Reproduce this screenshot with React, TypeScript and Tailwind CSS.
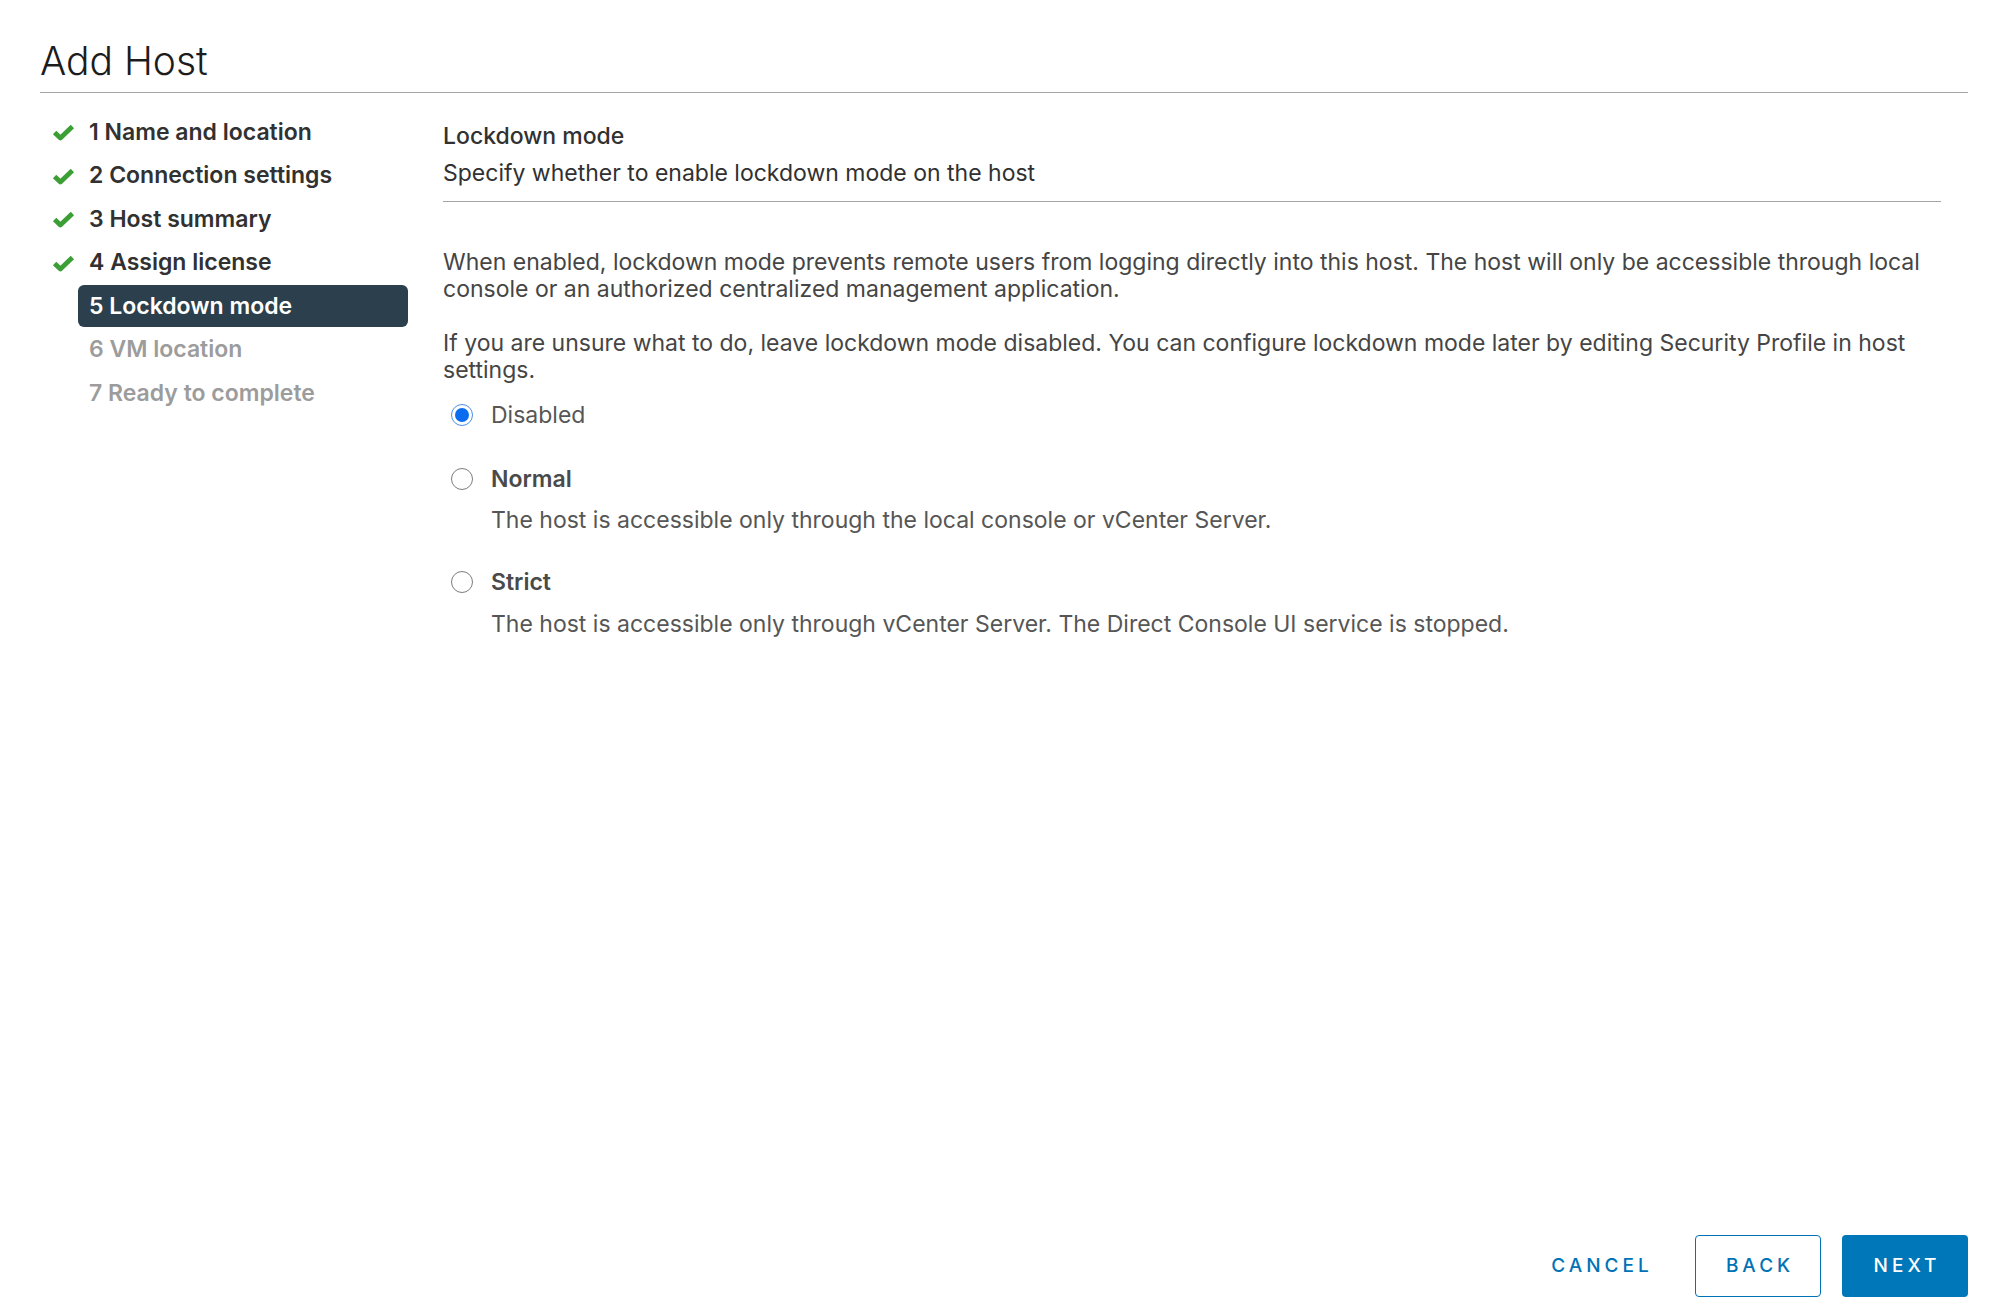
const steps = [
  { n: 1, label: 'Name and location', state: 'done' },
  { n: 2, label: 'Connection settings', state: 'done' },
  { n: 3, label: 'Host summary', state: 'done' },
  { n: 4, label: 'Assign license', state: 'done' },
  { n: 5, label: 'Lockdown mode', state: 'current' },
  { n: 6, label: 'VM location', state: 'todo' },
  { n: 7, label: 'Ready to complete', state: 'todo' },
];

const options = [
  { label: 'Disabled', desc: '', checked: true },
  { label: 'Normal', desc: 'The host is accessible only through the local console or vCenter Server.', checked: false },
  { label: 'Strict', desc: 'The host is accessible only through vCenter Server. The Direct Console UI service is stopped.', checked: false },
];

function CheckMark() {
  return (
    <svg width="23" height="17" viewBox="0 0 23 17" fill="none">
      <path d="M2.6 8.4 L8.4 14 L20.4 2.6" stroke="#3c9f36" strokeWidth="4.8" strokeLinejoin="round" />
    </svg>
  );
}

function Radio({ checked }: { checked: boolean }) {
  if (checked) {
    return (
      <span className="flex h-[22px] w-[22px] shrink-0 items-center justify-center rounded-full border-[1.5px] border-[#4d8fe8] bg-white">
        <span className="h-[14px] w-[14px] rounded-full bg-[#0b6cf0]" />
      </span>
    );
  }
  return <span className="h-[22px] w-[22px] shrink-0 rounded-full border border-[#7d7d7d] bg-white" />;
}

export default function App() {
  return (
    <div className="flex min-h-screen flex-col bg-white pl-[40px] pr-[32px] font-['Inter',sans-serif] text-[#313131]">
      <header className="border-b border-[#a3a3a3] pt-[37px] pb-[7px]">
        <h1 className="text-[39px] font-light leading-[48px] text-[#1c1c1c]">Add Host</h1>
      </header>

      <div className="flex flex-1">
        <nav className="w-[368px] shrink-0 pt-[17px]">
          {steps.map(s => (
            <div key={s.n} className="flex h-[43.5px] items-center">
              <div className="w-[38px] shrink-0 pl-[12px] pt-[2px]">{s.state === 'done' && <CheckMark />}</div>
              <div
                className={
                  s.state === 'current'
                    ? 'flex h-[42px] w-[330px] items-center rounded-[6px] bg-[#2b3f4d] px-[11px] text-[23px] font-semibold text-white'
                    : s.state === 'done'
                      ? 'flex h-[42px] w-[330px] items-center px-[11px] text-[23px] font-semibold text-[#313131]'
                      : 'flex h-[42px] w-[330px] items-center px-[11px] text-[23px] font-semibold text-[#9c9c9c]'
                }
              >
                {s.n} {s.label}
              </div>
            </div>
          ))}
        </nav>

        <main className="ml-[35px] flex-1 pr-[27px] pt-[29px]">
          <h2 className="text-[23px] font-medium leading-[28px] text-[#313131]">Lockdown mode</h2>
          <p className="mt-[9px] text-[23px] leading-[28px] text-[#313131]">Specify whether to enable lockdown mode on the host</p>
          <div className="mt-[14px] border-b border-[#a3a3a3]" />

          <p className="mt-[47px] text-[23px] leading-[27px] text-[#454545]">
            When enabled, lockdown mode prevents remote users from logging directly into this host. The host will only be accessible through local console or an authorized centralized management application.
          </p>
          <p className="mt-[27px] text-[23px] leading-[27px] text-[#454545]">
            If you are unsure what to do, leave lockdown mode disabled. You can configure lockdown mode later by editing Security Profile in host settings.
          </p>

          <div className="mt-[17px] flex flex-col">
            {options.map((o, i) => (
              <div key={o.label} className={i === 0 ? '' : i === 1 ? 'mt-[36px]' : 'mt-[34px]'}>
                <label className="flex h-[28px] items-center gap-[18px] pl-[8px]">
                  <Radio checked={o.checked} />
                  <span className={o.checked ? 'text-[23px] text-[#565656]' : 'text-[23px] font-semibold text-[#4a4a4a]'}>{o.label}</span>
                </label>
                {o.desc && (
                  <p className={i === 1 ? 'mt-[14px] pl-[48px] text-[23px] leading-[27px] text-[#565656]' : 'mt-[15px] pl-[48px] text-[23px] leading-[27px] text-[#565656]'}>
                    {o.desc}
                  </p>
                )}
              </div>
            ))}
          </div>
        </main>
      </div>

      <footer className="flex items-center justify-end pb-[19px]">
        <button className="mr-[32px] flex h-[62px] w-[126px] items-center justify-center pl-[4px] text-[19px] font-medium uppercase tracking-[4px] text-[#0072b5]">
          Cancel
        </button>
        <button className="mr-[21px] flex h-[62px] w-[126px] items-center justify-center rounded-[4px] border border-[#0072b5] bg-white pl-[4px] text-[19px] font-medium uppercase tracking-[4px] text-[#0072b5]">
          Back
        </button>
        <button className="flex h-[62px] w-[126px] items-center justify-center rounded-[4px] bg-[#0077b8] pl-[4px] text-[19px] font-medium uppercase tracking-[4px] text-white">
          Next
        </button>
      </footer>
    </div>
  );
}
